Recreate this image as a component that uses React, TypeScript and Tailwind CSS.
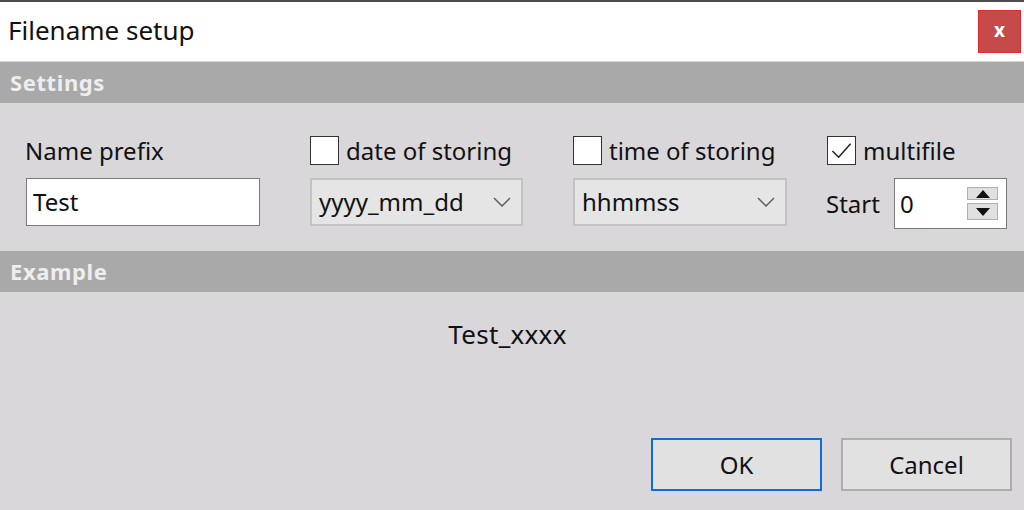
const font = { fontFamily: '"Noto Sans", "Open Sans", Arial, sans-serif' };

function Checkbox({ checked, label }: { checked?: boolean; label: string }) {
  return (
    <div className="flex h-[29px] items-center gap-[7px]">
      <span className="flex h-[29px] w-[29px] shrink-0 items-center justify-center border-[1.5px] border-[#333] bg-white">
        {checked ? (
          <svg viewBox="0 0 24 24" className="h-[23px] w-[23px]" fill="none" stroke="#222" strokeWidth="1.6">
            <path d="M2.5 12.5l6.5 6.5L21.5 5" />
          </svg>
        ) : null}
      </span>
      <span className="whitespace-nowrap text-[24px] leading-none text-[#111]">{label}</span>
    </div>
  );
}

function Select({ value }: { value: string }) {
  return (
    <div className="flex h-[48px] items-center justify-between border-2 border-[#c3c3c3] bg-[#e5e5e5] pl-[7px] pr-[10px]">
      <span className="text-[24px] text-[#111]">{value}</span>
      <svg viewBox="0 0 18 10" className="h-[10px] w-[18px]" fill="none" stroke="#555" strokeWidth="1.3">
        <path d="M1 1L9 9L17 1" />
      </svg>
    </div>
  );
}

function SectionHeader({ title }: { title: string }) {
  return (
    <div className="flex h-[41px] items-center bg-[#a9a9a9] px-[10px]">
      <span className="text-[22px] font-bold tracking-[0.6px] text-[#eeeeee]">{title}</span>
    </div>
  );
}

export default function App() {
  return (
    <div className="flex h-[510px] w-[1024px] flex-col overflow-hidden bg-[#d9d7da]" style={font}>
      <div className="h-[2px] bg-[#4d4d4d]" />
      <div className="flex h-[59px] items-center justify-between bg-white pl-[8px] pr-[3px]">
        <span className="pb-[3px] text-[26px] text-[#111]">Filename setup</span>
        <button className="flex h-[43px] w-[43px] items-center justify-center border border-[#e02c2c] bg-[#c74a4a] pb-[3px] text-[19px] font-bold leading-none text-white">
          x
        </button>
      </div>
      <div className="h-px bg-[#d4d4d4]" />
      <SectionHeader title="Settings" />

      <div className="flex h-[148px] pt-[33px]">
        <div className="ml-[26px] flex w-[234px] flex-col gap-[13px]">
          <div className="flex h-[29px] items-center">
            <span className="-ml-px text-[24px] leading-none text-[#111]">Name prefix</span>
          </div>
          <div className="flex h-[48px] items-center border-[1.5px] border-[#7a7a7a] bg-white px-[6px]">
            <span className="text-[24px] text-[#111]">Test</span>
          </div>
        </div>

        <div className="ml-[50px] flex w-[213px] flex-col gap-[13px]">
          <Checkbox label="date of storing" />
          <Select value="yyyy_mm_dd" />
        </div>

        <div className="ml-[50px] flex w-[214px] flex-col gap-[13px]">
          <Checkbox label="time of storing" />
          <Select value="hhmmss" />
        </div>

        <div className="ml-[39px] flex w-[181px] flex-col gap-[13px]">
          <div className="pl-px">
            <Checkbox checked label="multifile" />
          </div>
          <div className="flex items-center gap-[14px]">
            <span className="text-[24px] text-[#111]">Start</span>
            <div className="flex h-[51px] flex-1 items-center justify-between border-[1.5px] border-[#7a7a7a] bg-white pl-[5px] pr-[8px]">
              <span className="text-[24px] text-[#111]">0</span>
              <div className="flex flex-col gap-[3px]">
                <span className="flex h-[13px] w-[31px] items-center justify-center border border-[#b0b0b0] bg-[#e0e0e0]">
                  <svg viewBox="0 0 14 8" className="h-[8px] w-[14px]">
                    <path d="M0 8L7 0L14 8Z" fill="#111" />
                  </svg>
                </span>
                <span className="flex h-[17px] w-[31px] items-center justify-center border border-[#b0b0b0] bg-[#e0e0e0]">
                  <svg viewBox="0 0 14 8" className="h-[8px] w-[14px]">
                    <path d="M0 0L7 8L14 0Z" fill="#111" />
                  </svg>
                </span>
              </div>
            </div>
          </div>
        </div>
      </div>

      <SectionHeader title="Example" />

      <div className="flex flex-1 flex-col">
        <div className="mt-[23px] flex justify-center pr-[9px]">
          <span className="text-[26px] tracking-[0.3px] text-[#111]">Test_xxxx</span>
        </div>
        <div className="mt-auto mb-[19px] flex justify-end gap-[19px] pr-[12px]">
          <button className="flex h-[53px] w-[171px] items-center justify-center border-2 border-[#0a6fd8] bg-[#e1e1e1] text-[24px] text-[#111]">
            OK
          </button>
          <button className="flex h-[53px] w-[171px] items-center justify-center border-2 border-[#adadad] bg-[#e1e1e1] text-[24px] text-[#111]">
            Cancel
          </button>
        </div>
      </div>
    </div>
  );
}
